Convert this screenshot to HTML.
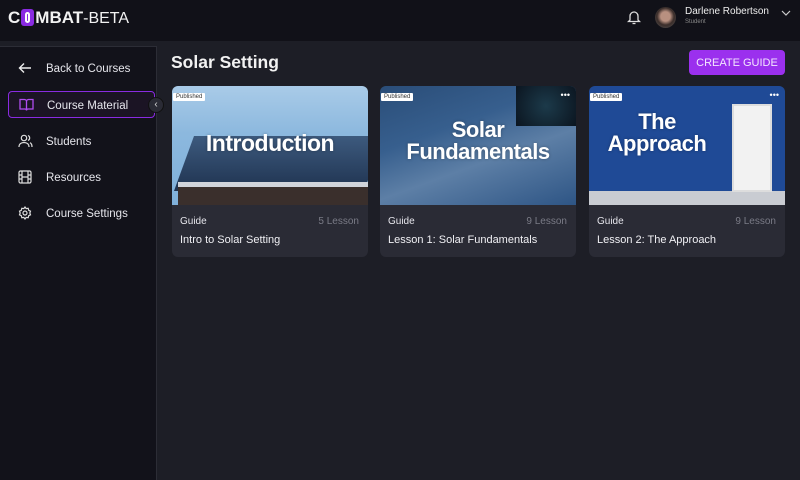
<!DOCTYPE html>
<html><head><meta charset="utf-8"><style>
*{margin:0;padding:0;box-sizing:border-box}
body{width:800px;height:480px;overflow:hidden;background:#1d1e26;font-family:"Liberation Sans",sans-serif;color:#e8e8ee;position:relative}
.hdr{position:absolute;left:0;top:0;width:800px;height:41px;background:#111118}
.logo{position:absolute;left:8px;top:8px;font-size:17px;font-weight:bold;letter-spacing:0;color:#f2f2f2}
.logo .o{display:inline-block;width:13px;height:17px;background:#8a2be2;border-radius:3px;vertical-align:-3px;margin:0 1px;position:relative}
.logo .o:after{content:"";position:absolute;left:4px;top:3px;width:5px;height:11px;border:2px solid #fff;border-radius:3px;box-sizing:border-box}
.logo .b{font-weight:normal;font-size:16px}
.side{position:absolute;left:0;top:46px;width:157px;height:434px;background:#12121a;border-right:1px solid #2c2d36;border-top:1px solid #2c2d36}
.item{position:absolute;left:8px;width:147px;height:27px;font-size:11.5px;color:#e6e6ec;padding-left:38px;line-height:28px}
.item svg{position:absolute;left:10px;top:6px}
.active{border:1px solid #8a2be2;border-radius:4px;background:#1b1424}
.tog{position:absolute;left:148px;top:97px;width:16px;height:16px;border-radius:50%;background:#2a2b35;border:1px solid #111;color:#ddd;font-size:10px;text-align:center;line-height:14px}
h1{position:absolute;left:171px;top:52px;font-size:17.5px;font-weight:bold;color:#f2f2f2}
.btn{position:absolute;left:689px;top:50px;width:96px;height:25px;background:#9b30ee;border-radius:4px;font-size:11px;color:#f3e6ff;display:flex;align-items:center;justify-content:center}
.card{position:absolute;top:86px;width:196px;height:171px;background:#2a2b35;border-radius:6px;overflow:hidden}
.img{height:119px;position:relative;overflow:hidden}
.pub{position:absolute;left:1px;top:7px;background:#fff;color:#333;font-size:6px;padding:1px 3px;border-radius:1px}
.dots{position:absolute;right:6px;top:4px;color:#fff;font-size:9px}
.ttl{position:absolute;left:0;right:0;text-align:center;color:#fff;font-weight:bold;font-size:22px;line-height:22px;letter-spacing:-0.5px;text-shadow:0 0 3px rgba(0,0,0,.3)}
.g{position:absolute;left:8px;top:130px;font-size:10px;color:#e6e6ec}
.l{position:absolute;right:9px;top:130px;font-size:10px;color:#7a7b86}
.n{position:absolute;left:8px;top:148px;font-size:11px;color:#f0f0f4}
</style></head><body>
<div class="hdr">
<div class="logo">C<span class="o"></span>MBAT<span class="b">-BETA</span></div>
<svg style="position:absolute;left:627px;top:10px" width="14" height="15" viewBox="0 0 14 15" fill="none" stroke="#ddd" stroke-width="1.3"><path d="M3 10V6a4 4 0 0 1 8 0v4l1.5 1.5h-11z"/><path d="M5.5 13.5h3"/></svg>
<div style="position:absolute;left:655px;top:7px;width:21px;height:21px;border-radius:50%;background:radial-gradient(circle at 50% 45%,#b89080 0 30%,#3a2d2a 55%,#555 100%)"></div>
<div style="position:absolute;left:685px;top:6px;font-size:10px;color:#eee">Darlene Robertson</div>
<div style="position:absolute;left:685px;top:19px;font-size:6px;color:#888">Student</div>
<svg style="position:absolute;left:781px;top:10px" width="10" height="7" viewBox="0 0 10 7" fill="none" stroke="#ccc" stroke-width="1.2"><path d="M1 1l4 4 4-4"/></svg>
</div>
<div class="side">
<div class="item" style="top:8px"><svg width="14" height="14" viewBox="0 0 14 14" fill="none" stroke="#eee" stroke-width="1.4"><path d="M13 7H2M6 2.5L1.5 7 6 11.5"/></svg>Back to Courses</div>
<div class="item active" style="top:44px"><svg width="15" height="13" viewBox="0 0 15 13" fill="none" stroke="#b04cf0" stroke-width="1.3"><path d="M1 1.5h4.5a2 2 0 0 1 2 2v9a1.5 1.5 0 0 0-1.5-1.5H1zM14 1.5H9.5a2 2 0 0 0-2 2v9A1.5 1.5 0 0 1 9 11h5z"/></svg>Course Material</div>
<div class="item" style="top:81px"><svg width="15" height="14" viewBox="0 0 15 14" fill="none" stroke="#ddd" stroke-width="1.2"><circle cx="6" cy="4" r="2.7"/><path d="M1 13c0-3 2.200-4.5 5-4.5s5 1.5 5 4.5M10 1.5a2.7 2.7 0 0 1 0 5M12 8.7c1.3.6 2 2 2 4.3"/></svg>Students</div>
<div class="item" style="top:117px"><svg width="14" height="14" viewBox="0 0 14 14" fill="none" stroke="#ddd" stroke-width="1.2"><rect x="1" y="1" width="12" height="12" rx="1.5"/><path d="M4 1v12M10 1v12M1 5h3M1 9h3M10 5h3M10 9h3M4 7h6"/></svg>Resources</div>
<div class="item" style="top:153px"><svg width="14" height="14" viewBox="0 0 14 14" fill="none" stroke="#ddd" stroke-width="1.2"><circle cx="7" cy="7" r="2"/><path d="M7 1l1.2 1.6 2-.3.5 2 1.8.9-.7 1.8.7 1.8-1.8.9-.5 2-2-.3L7 13l-1.2-1.6-2 .3-.5-2-1.8-.9.7-1.8-.7-1.8 1.8-.9.5-2 2 .3z"/></svg>Course Settings</div>
</div>
<div class="tog">‹</div>
<h1>Solar Setting</h1>
<div class="btn">CREATE GUIDE</div>

<div class="card" style="left:172px">
<div class="img" style="background:linear-gradient(180deg,#a9cbe8 0%,#8cb8de 40%,#7fb0da 100%)">
<div style="position:absolute;left:12px;top:50px;width:190px;height:55px;background:linear-gradient(180deg,#3d5a7e,#1f3350);transform:skewX(-20deg)"></div>
<div style="position:absolute;left:6px;top:100px;width:190px;height:19px;background:#3a2f2c"></div>
<div style="position:absolute;left:6px;top:96px;width:190px;height:5px;background:#d0d4da"></div>
<div class="pub">Published</div>
<div class="ttl" style="top:46px;font-size:23px">Introduction</div>
</div>
<div class="g">Guide</div><div class="l">5 Lesson</div><div class="n">Intro to Solar Setting</div>
</div>

<div class="card" style="left:380px">
<div class="img" style="background:linear-gradient(160deg,#2a4d78 0%,#375f8e 35%,#5d7fa6 60%,#2e5585 100%)">
<div style="position:absolute;right:0;top:0;width:60px;height:40px;background:radial-gradient(circle,#1c3a4a,#0b1520)"></div>
<div class="pub">Published</div><div class="dots">•••</div>
<div class="ttl" style="top:33px">Solar<br>Fundamentals</div>
</div>
<div class="g">Guide</div><div class="l">9 Lesson</div><div class="n">Lesson 1: Solar Fundamentals</div>
</div>

<div class="card" style="left:589px">
<div class="img" style="background:#1f4a96">
<div style="position:absolute;left:0;bottom:0;width:100%;height:14px;background:#c9ccd2"></div>
<div style="position:absolute;left:143px;top:18px;width:40px;height:88px;background:#f2f2f2;border:2px solid #ddd"></div>
<div class="pub">Published</div><div class="dots">•••</div>
<div class="ttl" style="top:25px;left:-60px">The<br>Approach</div>
</div>
<div class="g">Guide</div><div class="l">9 Lesson</div><div class="n">Lesson 2: The Approach</div>
</div>
</body></html>
